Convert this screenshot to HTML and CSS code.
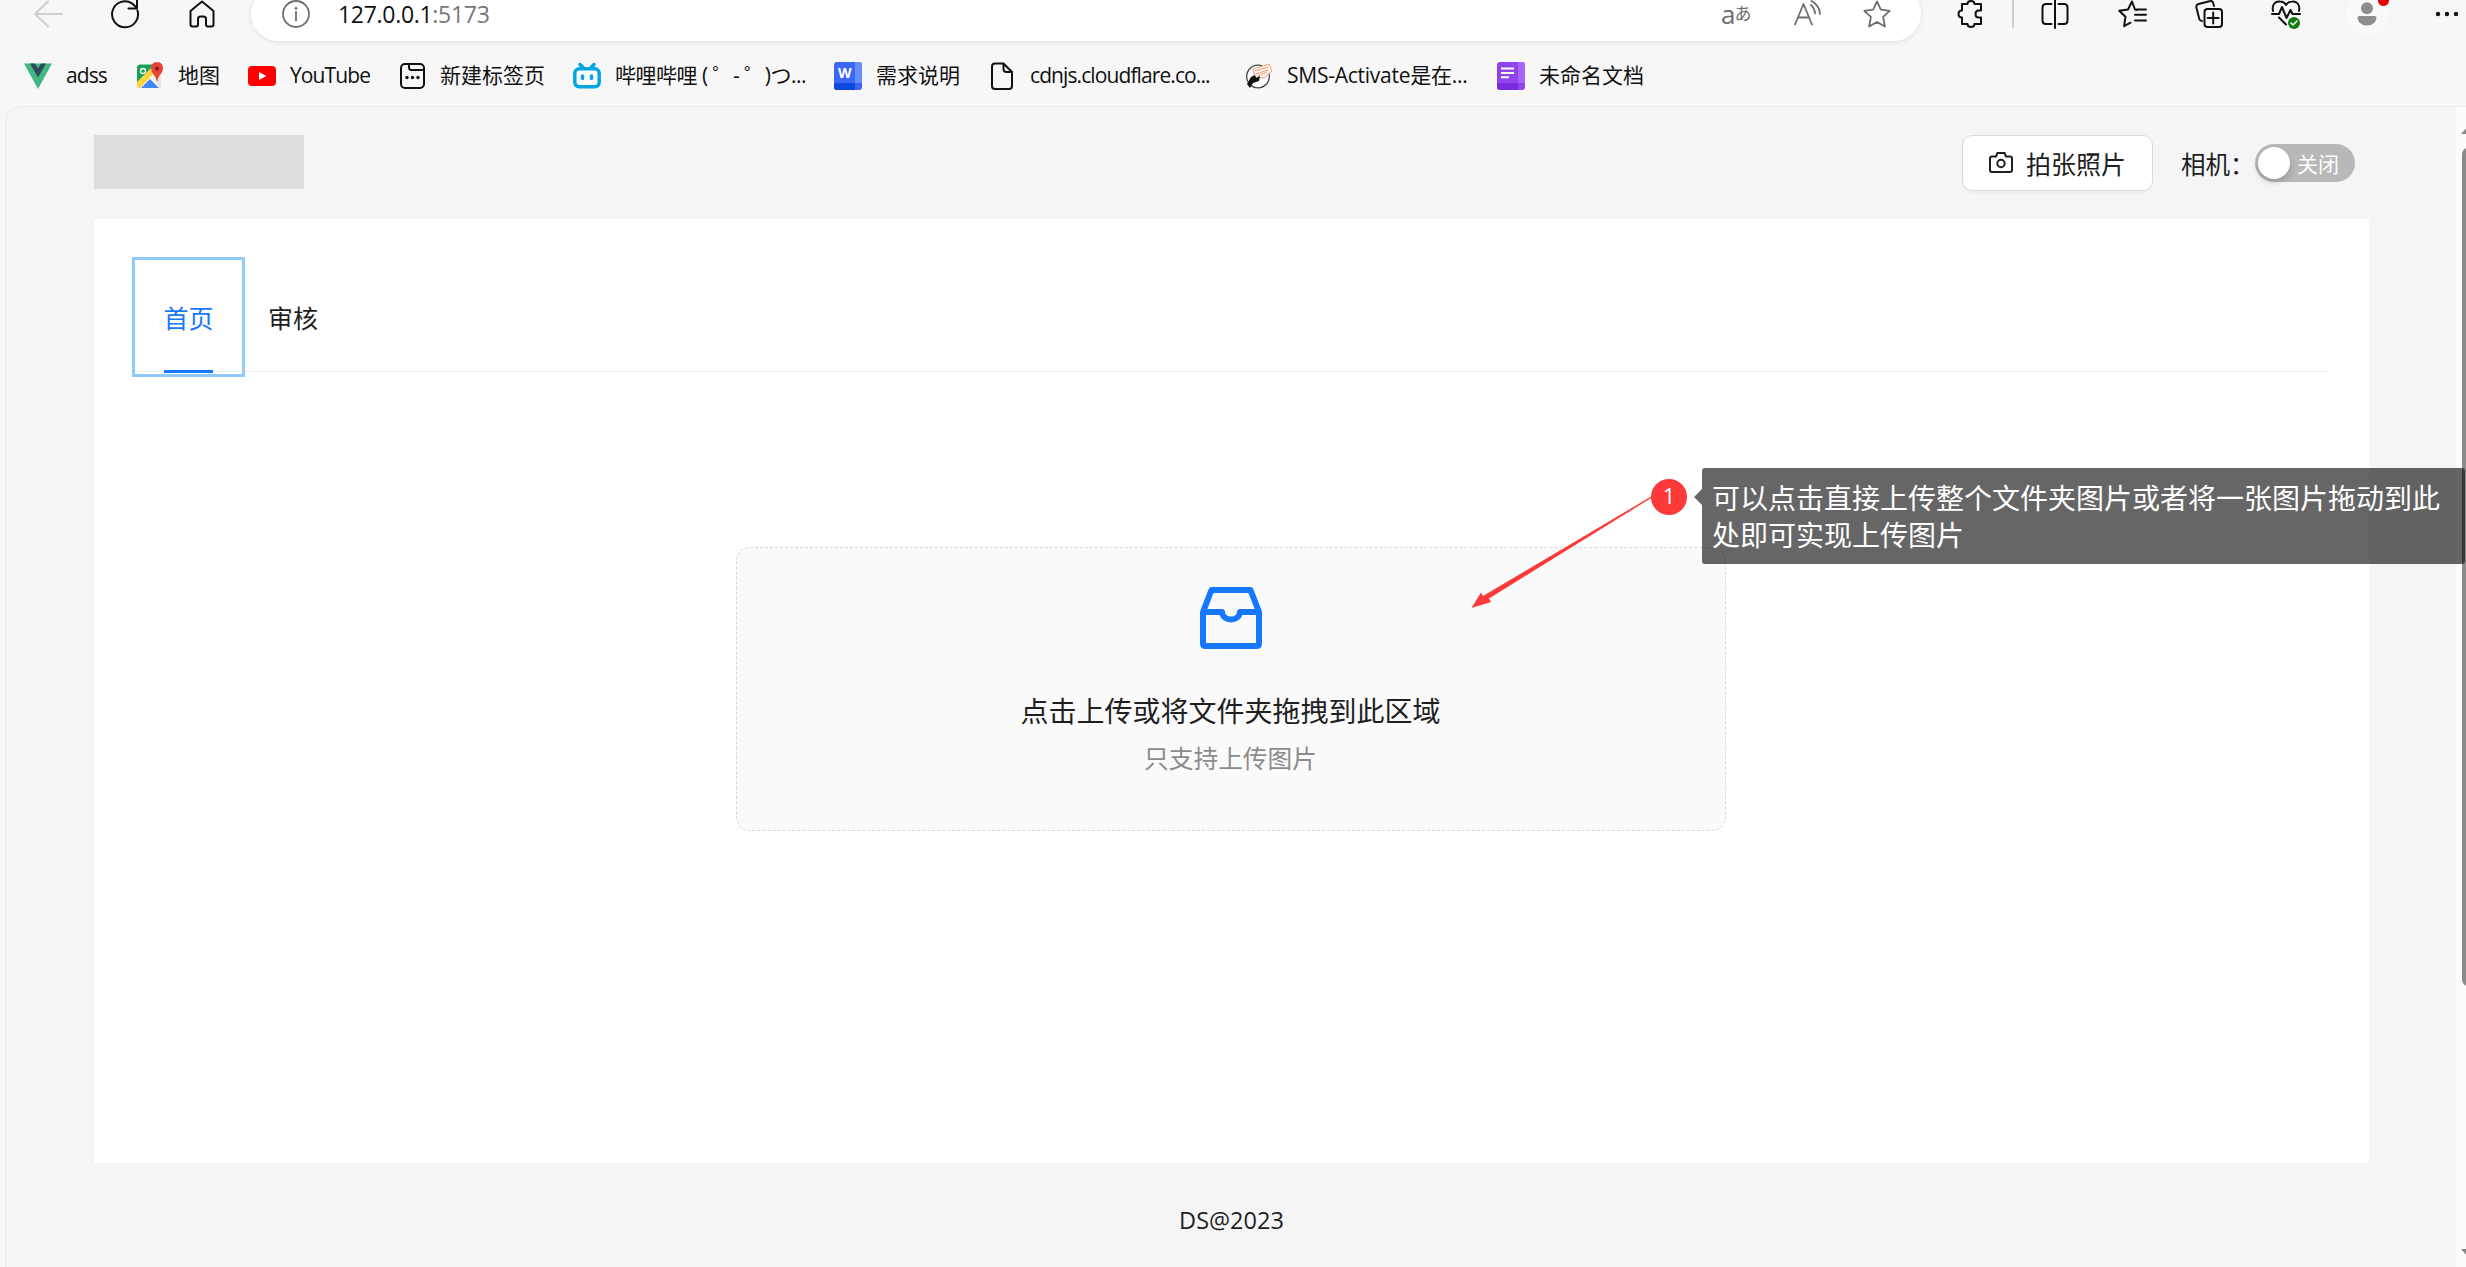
FILE: index.html
```html
<!DOCTYPE html>
<html lang="zh-CN">
<head>
<meta charset="utf-8">
<title>DS</title>
<link rel="stylesheet" href="styles.css">
</head>
<body>
<div class="browser">
  <header class="toolbar">
    <div class="nav">
      <svg class="ic faint" viewBox="0 0 28 28"><path d="M28 14H1M14 1.500L1 14l13 12.500"/></svg>
      <svg class="ic dark" viewBox="0 0 28 28"><path d="M26.500 10.500A13 13 0 1 1 21 3.300L26 8M26 0v8.500h-8.500"/></svg>
      <svg class="ic dark" viewBox="0 0 28 28"><path d="M14 1.500L2.500 11v13.500q0 2 2 2H8q2 0 2-2V19q0-2.500 2.500-2.500h3Q18 16.500 18 19v5.500q0 2 2 2h3.500q2 0 2-2V11z"/></svg>
    </div>
    <div class="address">
      <svg class="ic gray" viewBox="0 0 28 28"><circle cx="14" cy="14" r="13"/><path d="M14 12v8.500"/><circle class="dot" cx="14" cy="8.300" r="1.400"/></svg>
      <span class="url">127.0.0.1<span class="port">:5173</span></span>
      <div class="page-actions">
        <span class="translate">a<small>あ</small></span>
        <svg class="ic gray" viewBox="0 0 28 28"><path d="M2 24.500L10.500 4 19 24.500M5 17.500h11M18 5q3.500 3 4 8.500M18.500 1q8 4.500 8.500 13"/></svg>
        <svg class="ic gray" viewBox="0 0 28 28"><path d="M14 1.500l3.800 8.200 8.900 1.100-6.600 6.100 1.800 9.600L14 22l-7.900 4.500 1.800-9.600-6.600-6.100 8.900-1.100z"/></svg>
      </div>
    </div>
    <div class="tools">
      <svg class="ic dark" viewBox="0 0 28 28"><path d="M5 4h5.500q0-3 3.500-3t3.500 3H24v6.500h-2.500q-3 0-3 3.500t3 3.500H24V24h-6.500q0 3-3.500 3t-3.500-3H5v-6.500q-3.500 0-3.500-3.500T5 10.500z"/></svg>
      <span class="divider"></span>
      <svg class="ic dark" viewBox="0 0 28 28"><path d="M14 0v28M10.500 4H5Q1.500 4 1.500 7.500v13Q1.500 24 5 24h5.500M17.500 4H23q3.500 0 3.500 3.500v13Q26.500 24 23 24h-5.500"/></svg>
      <svg class="ic dark" viewBox="0 0 28 28"><path d="M19 10l-2-.5-3-8-4 8-8.800 1.200 6.300 6-1.400 9.500 6.400-3.500M17 9.500h11M17 14.800h11M17 20.500h11"/></svg>
      <svg class="ic dark" viewBox="0 0 28 28"><rect x="9.500" y="9" width="17.500" height="18" rx="3"/><path d="M18.200 12.500v11M12.700 18h11M19 6l-1-3.500Q17.500.8 15.500 1L3.500 4Q1 4.800 1.300 7l3 12q.6 2 2.700 2"/></svg>
      <svg class="ic dark" viewBox="0 0 28 28"><path d="M1 11C-.5 4 4 1 8 1.500q4 0 6 3.500 2-3.500 6-3.500c4-.5 8.500 2.500 7 9.500M0 14h7l3-7 4.500 11 4-8 2 4H28M7 17.500l7 7"/><circle class="ok" cx="22" cy="23" r="6"/><path class="tick" d="M19 23l2 2 4-4"/></svg>
      <span class="avatar"><svg viewBox="0 0 40 40"><circle cx="20" cy="14" r="6.300"/><path d="M12 22h16q2 0 2 2-1 8-10 8t-10-8q0-2 2-2z"/></svg><i class="notice"></i></span>
      <svg class="ic more" viewBox="0 0 28 28"><circle cx="5" cy="14" r="2.200"/><circle cx="14" cy="14" r="2.200"/><circle cx="23" cy="14" r="2.200"/></svg>
    </div>
  </header>
  <nav class="bookmarks">
    <a><svg viewBox="0 0 28 28"><path fill="#41b883" d="M0 1.500h28L14 27z"/><path fill="#34495e" d="M6 1.500h5l3 5 3-5h5L14 15.500z"/></svg><span class="latin">adss</span></a>
    <a><svg viewBox="0 0 28 28"><path fill="#1a9f59" d="M3 2.500h19L4 21H1V4.500z"/><path fill="#e2e4e4" d="M17 13l8-7v18q0 2-2 2z"/><path fill="#4285f4" d="M5 26l9-9 9 9z"/><path fill="#fcd53b" d="M1 20L17 4l4 4L4 26H3q-2 0-2-2z"/><path fill="#e94335" d="M21 0q6 .4 6 6.500 0 3-3 6.500-2 2-2.500 6h-1Q20 15 18 13q-3-3.500-3-6.500Q15 .4 21 0z"/><circle cx="21" cy="6.500" r="2" fill="#801f1a"/><circle cx="7" cy="9" r="2.500" fill="none" stroke="#fff" stroke-width="1.300"/></svg><span>地图</span></a>
    <a><svg viewBox="0 0 28 28"><rect y="4" width="28" height="20" rx="4" fill="#f00"/><path fill="#fff" d="M11 10l7.500 4-7.500 4z"/></svg><span class="latin">YouTube</span></a>
    <a><svg class="line" viewBox="0 0 28 28"><rect x="3" y="2" width="23" height="24" rx="4"/><path d="M11 2v3.500q0 2.500 2.500 2.500H26"/><g fill="#111" stroke="none"><circle cx="9" cy="15.500" r="1.700"/><circle cx="14.500" cy="15.500" r="1.700"/><circle cx="20" cy="15.500" r="1.700"/></g></svg><span>新建标签页</span></a>
    <a><svg viewBox="0 0 28 28"><g fill="none" stroke="#00a5e2" stroke-width="3.500" stroke-linecap="round"><rect x="1.800" y="6.800" width="24.400" height="18" rx="4.500" fill="#fff"/><path d="M7 2.500l3 3M21 2.500l-3 3M9.500 14v2.500M18.500 14v2.500"/></g></svg><span class="kaomoji">哔哩哔哩 ( ゜- ゜)つ...</span></a>
    <a><svg viewBox="0 0 28 28"><rect width="28" height="28" rx="3" fill="#3b66f6"/><path fill="#6490ff" d="M21 0h4q3 0 3 3v18h-7z"/><path fill="#0d48df" d="M0 21h21v7H3q-3 0-3-3z"/><text x="4" y="16" class="word">W</text></svg><span>需求说明</span></a>
    <a><svg class="line" viewBox="0 0 28 28"><path d="M7 1.500h8.500L24 10v14q0 3-3 3H7q-3 0-3-3V4.500q0-3 3-3zM15.500 1.500V7q0 3 3 3H24"/></svg><span class="latin">cdnjs.cloudflare.co...</span></a>
    <a><svg viewBox="0 0 28 28"><circle cx="13" cy="14.500" r="11.300" fill="#fff" stroke="#444" stroke-width="1.300"/><path d="M8 7l16-5 3 7-8 7-9-1z" fill="#fff2e9" stroke="#e7a27c"/><path d="M10 9l13-4M11 12l12-4M13 14l9-4" stroke="#e7a27c"/><path d="M6 15l4-2 1 3 4-2-1 5-6 2-3 5-3-4z" fill="#111"/></svg><span class="mixed">SMS-Activate是在...</span></a>
    <a><svg viewBox="0 0 28 28"><rect width="28" height="28" rx="3" fill="#8e43ec"/><path fill="#a663ff" d="M21 0h4q3 0 3 3v18h-7z"/><path fill="#7a2bdc" d="M0 21h21v7H3q-3 0-3-3z"/><path d="M4 6.500h13M4 11h13M4 15.300h8" stroke="#fff" stroke-width="2"/></svg><span>未命名文档</span></a>
  </nav>
  <div class="viewport">
    <main class="app">
      <div class="topbar">
        <div class="logo"></div>
        <div class="controls">
          <button class="photo"><svg viewBox="0 0 24 22"><path d="M3 4.500h4L8.500 1h7L17 4.500h4q2 0 2 2V18q0 2-2 2H3q-2 0-2-2V6.500q0-2 2-2z"/><circle cx="12" cy="11.500" r="3.700"/></svg><span>拍张照片</span></button>
          <span class="label">相机：</span>
          <span class="switch"><i class="knob"></i><span>关闭</span></span>
        </div>
      </div>
      <section class="panel">
        <div class="tabs">
          <div class="tab active"><span>首页</span></div>
          <div class="tab"><span>审核</span></div>
        </div>
        <div class="dragger">
          <svg viewBox="0 0 62 62"><path d="M11.500 3h39L59 25v31.500q0 2.500-2.500 2.500h-51Q3 59 3 56.500V25zM3 25h19c1 10 17 10 18 0h19"/></svg>
          <p class="title">点击上传或将文件夹拖拽到此区域</p>
          <p class="hint">只支持上传图片</p>
        </div>
      </section>
      <footer>DS@2023</footer>
    </main>
    <div class="scrollbar"><i class="up"></i><i class="thumb"></i><i class="down"></i></div>
  </div>
  <svg class="pointer" viewBox="0 0 182 114"><path d="M181 0v1.500L18 102.500l2 3.500L.5 112 10 96.500l2 3.500z"/></svg>
  <span class="pin">1</span>
  <div class="note">可以点击直接上传整个文件夹图片或者将一张图片拖动到此处即可实现上传图片</div>
</div>
</body>
</html>
```
FILE: styles.css
```css
* { box-sizing: border-box; }
body { margin: 0; font-family: "Open Sans", "Noto Sans CJK SC", sans-serif; color: #1f1f1f; }
.browser { position: relative; width: 2466px; height: 1267px; overflow: hidden; background: #f7f7f7; display: flex; flex-direction: column; }
.ic { width: 28px; height: 28px; flex: none; fill: none; stroke-width: 2; stroke-linecap: round; stroke-linejoin: round; overflow: visible; }
.dark { stroke: #111; }
.gray { stroke: #6e6e6e; stroke-width: 1.8; }
.faint { stroke: #cfcfcf; }
.gray .dot { fill: #6e6e6e; stroke: none; }
.more { fill: #111; }
.ok { fill: #107c10; stroke: none; }
.tick { stroke: #fff; stroke-width: 1.6; }

.toolbar { height: 54px; margin-top: -13px; flex: none; display: flex; align-items: center; }
.nav { width: 251px; padding-left: 34px; display: flex; gap: 49px; }
.address { width: 1670px; height: 54px; border-radius: 27px; background: #fff; box-shadow: 0 1px 5px rgba(0,0,0,.1); padding: 0 30px 0 31px; display: flex; align-items: center; }
.url { margin-left: 28px; font-size: 23px; line-height: 26px; letter-spacing: -.3px; color: #111; }
.port { color: #767676; }
.page-actions { margin-left: auto; display: flex; align-items: center; gap: 42px; }
.translate { display: flex; align-items: center; width: 30px; height: 24px; font-size: 26px; line-height: 24px; color: #6e6e6e; }
.translate small { font-size: 17px; margin-left: -1px; }
.tools { display: flex; align-items: center; padding-left: 36px; }
.divider { width: 2px; height: 28px; margin: 0 27px; background: #cfcfcf; }
.tools .dark + .dark { margin-left: 49px; }
.avatar { position: relative; width: 40px; height: 40px; margin-left: 47px; border-radius: 50%; background: #f9f9f9; border: 1px solid #fff; }
.avatar svg { display: block; width: 38px; height: 38px; fill: #8d8d8d; }
.notice { position: absolute; left: 30px; top: 0; width: 11px; height: 11px; border-radius: 50%; background: #e60000; }
.more { margin-left: 46px; }

.bookmarks { height: 65px; padding: 5px 0 0 24px; display: grid; grid-template-columns: 112px 112px 150px 175px 261px 154px 257px 252px auto; align-items: center; font-size: 21px; line-height: 28px; color: #111; }
.bookmarks a { display: flex; align-items: center; gap: 14px; white-space: nowrap; }
.bookmarks span { margin-top: -2px; }
.bookmarks svg { width: 28px; height: 28px; flex: none; }
.bookmarks .line { fill: none; stroke: #111; stroke-width: 2; }
.bookmarks .latin { letter-spacing: -.9px; }
.bookmarks .mixed { letter-spacing: -.25px; }
.bookmarks .kaomoji { letter-spacing: -.5px; }
.word { font: 700 14px "Open Sans", sans-serif; fill: #fff; }

.viewport { flex: 1; margin-left: 5px; border: 1px solid #e9e9e9; border-width: 1px 0 0 1px; border-radius: 15px 0 0 0; background: #f5f5f5; display: flex; overflow: hidden; }
.app { flex: 1; padding: 28px 87px 0 88px; display: flex; flex-direction: column; }
.topbar { height: 84px; display: flex; justify-content: space-between; align-items: flex-start; }
.logo { width: 210px; height: 54px; background: #ddd; }
.controls { height: 56px; display: flex; align-items: center; padding-right: 14px; font-size: 24.500px; }
.photo { width: 191px; height: 56px; border: 1px solid #d9d9d9; border-radius: 10px; background: #fff; box-shadow: 0 3px 0 rgba(0,0,0,.02); display: flex; justify-content: center; align-items: center; gap: 13px; font: inherit; font-size: 25px; color: inherit; padding: 0; }
.photo svg { width: 24px; height: 22px; fill: none; stroke: #1f1f1f; stroke-width: 2; }
.label { width: 74px; margin-left: 28px; white-space: nowrap; }
.switch { width: 100px; height: 38px; border-radius: 19px; padding: 3px; background: #b8b8b8; display: flex; align-items: center; gap: 7px; color: #fff; font-size: 21px; }
.knob { width: 32px; height: 32px; border-radius: 50%; background: #fff; box-shadow: 0 3px 6px rgba(0,35,11,.2); }
.panel { height: 944px; background: #fff; padding: 38px 41px 0 38px; }
.tabs { height: 115px; border-bottom: 1px solid #f0f0f0; display: flex; font-size: 25px; }
.tab { height: 120px; line-height: 123px; margin-left: 23px; }
.tab.active { position: relative; width: 113px; margin-left: 0; border: 3px solid #91caff; line-height: 117px; text-align: center; color: #1677ff; }
.tab.active::after { content: ""; position: absolute; left: 29px; bottom: 1px; width: 49px; height: 3px; background: #1677ff; }
.dragger { width: 990px; height: 284px; margin: 175px auto 0; padding-top: 39px; position: relative; left: .5px; border: 1px dashed #d9d9d9; border-radius: 14px; background: #fafafa; display: flex; flex-direction: column; align-items: center; }
.dragger svg { width: 62px; height: 62px; fill: none; stroke: #1677ff; stroke-width: 6; stroke-linejoin: round; }
.title { margin: 41px 0 0; font-size: 28px; line-height: 42px; }
.hint { margin: 8px 0 0; font-size: 24.700px; line-height: 38px; color: #8c8c8c; }
footer { padding-top: 40px; font-size: 23.500px; line-height: 34px; text-align: center; }

.scrollbar { width: 10px; flex: none; background: #fcfcfc; overflow: hidden; padding: 18px 0 0 5px; display: flex; flex-direction: column; }
.up, .down { width: 0; height: 0; flex: none; border: solid transparent; border-width: 0 8px 9px; border-bottom-color: #858585; }
.thumb { width: 12px; height: 838px; flex: none; margin: 14px 0 263px 1px; border-radius: 6px; background: #8b8b8b; }
.down { border-width: 9px 8px 0; border-top-color: #858585; }

.pointer { position: absolute; left: 1471px; top: 496px; width: 182px; height: 114px; fill: #fc3a3a; }
.pin { position: absolute; left: 1651px; top: 479px; width: 36px; height: 36px; border-radius: 50%; background: #fc3a3a; color: #fff; font-size: 22px; line-height: 33px; text-align: center; }
.note { position: absolute; left: 1702px; top: 468px; width: 763px; height: 96px; padding: 12px 22px 0 10px; border-radius: 3px; background: rgba(0,0,0,.6); color: #fff; font-size: 28px; line-height: 37px; }
.note::before { content: ""; position: absolute; left: -8px; top: 21px; border: solid transparent; border-width: 8px 8px 8px 0; border-right-color: rgba(0,0,0,.6); }
```
